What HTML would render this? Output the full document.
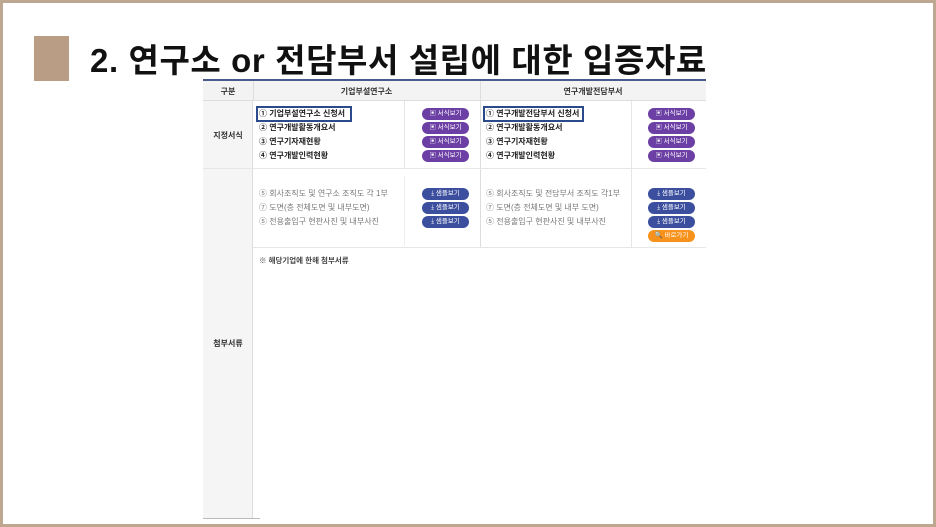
<!DOCTYPE html>
<html><head><meta charset="utf-8"><style>
*{margin:0;padding:0;box-sizing:border-box}
body{width:936px;height:527px;overflow:hidden;background:#fff;font-family:"Liberation Sans","Noto Sans CJK KR",sans-serif;position:relative}
.frame{position:absolute;left:0;top:0;width:936px;height:527px;border:3px solid #bda791}
.sq{position:absolute;left:34px;top:36px;width:35px;height:45px;background:#b99d85}
.title{position:absolute;left:90px;top:34px;font-size:33px;font-weight:bold;color:#111;white-space:nowrap;letter-spacing:0.6px}
.a{position:absolute;white-space:nowrap}
.t{font-size:8px;color:#222;line-height:14px;font-weight:bold}
.g{font-size:8px;color:#777;line-height:14px}
.btn{position:absolute;width:47px;height:12px;border-radius:6px;color:#fff;font-size:6.5px;line-height:12px;text-align:center}
.p{background:#6b3fa3}.b{background:#3b4f9e}.o{background:#f7921c}
</style></head><body>
<div class="frame"></div>
<div class="sq"></div>
<div class="title">2. 연구소 or 전담부서 설립에 대한 입증자료</div>

<div class="a" style="left:203px;top:79px;width:503px;height:2px;background:#4a5a8a"></div>
<div class="a" style="left:203px;top:81px;width:503px;height:20px;background:#f3f3f3;border-bottom:1px solid #ddd"></div>
<div class="a" style="left:203px;top:101px;width:50px;height:417px;background:#f5f5f5;border-right:1px solid #ddd"></div>
<div class="a" style="left:203px;top:518px;width:57px;height:1px;background:#bbb"></div>
<div class="a" style="left:253px;top:81px;width:1px;height:20px;background:#ddd"></div>
<div class="a" style="left:480px;top:81px;width:1px;height:166px;background:#ddd"></div>
<div class="a" style="left:203px;top:168px;width:503px;height:1px;background:#e6e6e6"></div>
<div class="a" style="left:253px;top:247px;width:453px;height:1px;background:#e6e6e6"></div>
<div class="a" style="left:404px;top:101px;width:1px;height:67px;background:#e6e6e6"></div>
<div class="a" style="left:404px;top:176px;width:1px;height:70px;background:#eee"></div>
<div class="a" style="left:631px;top:101px;width:1px;height:146px;background:#e6e6e6"></div>

<div class="a" style="left:203px;top:86px;width:50px;text-align:center;font-size:8px;font-weight:bold;color:#333">구분</div>
<div class="a" style="left:253px;top:86px;width:227px;text-align:center;font-size:8px;font-weight:bold;color:#333">기업부설연구소</div>
<div class="a" style="left:480px;top:86px;width:226px;text-align:center;font-size:8px;font-weight:bold;color:#333">연구개발전담부서</div>
<div class="a" style="left:203px;top:130px;width:50px;text-align:center;font-size:8px;font-weight:bold;color:#333">지정서식</div>
<div class="a" style="left:203px;top:338px;width:50px;text-align:center;font-size:8px;font-weight:bold;color:#333">첨부서류</div>

<div class="a" style="left:256px;top:106px;width:96px;height:16px;border:2px solid #2b4a8a"></div>
<div class="a t" style="left:259px;top:107px">① 기업부설연구소 신청서<br>② 연구개발활동개요서<br>③ 연구기자재현황<br>④ 연구개발인력현황</div>
<div class="a" style="left:483px;top:106px;width:101px;height:16px;border:2px solid #2b4a8a"></div>
<div class="a t" style="left:486px;top:107px">① 연구개발전담부서 신청서<br>② 연구개발활동개요서<br>③ 연구기자재현황<br>④ 연구개발인력현황</div>

<div class="btn p" style="left:422px;top:108px">▣ 서식보기</div>
<div class="btn p" style="left:422px;top:122px">▣ 서식보기</div>
<div class="btn p" style="left:422px;top:136px">▣ 서식보기</div>
<div class="btn p" style="left:422px;top:150px">▣ 서식보기</div>
<div class="btn p" style="left:648px;top:108px">▣ 서식보기</div>
<div class="btn p" style="left:648px;top:122px">▣ 서식보기</div>
<div class="btn p" style="left:648px;top:136px">▣ 서식보기</div>
<div class="btn p" style="left:648px;top:150px">▣ 서식보기</div>

<div class="a g" style="left:259px;top:187px">⑤ 회사조직도 및 연구소 조직도 각 1부<br>⑦ 도면(층 전체도면 및 내부도면)<br>⑤ 전용출입구 현판사진 및 내부사진</div>
<div class="a g" style="left:486px;top:187px">⑤ 회사조직도 및 전담부서 조직도 각1부<br>⑦ 도면(층 전체도면 및 내부 도면)<br>⑤ 전용출입구 현판사진 및 내부사진</div>
<div class="btn b" style="left:422px;top:188px">⤓ 샘플보기</div>
<div class="btn b" style="left:422px;top:202px">⤓ 샘플보기</div>
<div class="btn b" style="left:422px;top:216px">⤓ 샘플보기</div>
<div class="btn b" style="left:648px;top:188px">⤓ 샘플보기</div>
<div class="btn b" style="left:648px;top:202px">⤓ 샘플보기</div>
<div class="btn b" style="left:648px;top:216px">⤓ 샘플보기</div>
<div class="btn o" style="left:648px;top:230px">🔍 바로가기</div>

<div class="a" style="left:259px;top:255px;font-size:7.5px;font-weight:bold;color:#444">※ 해당기업에 한해 첨부서류</div>
</body></html>
